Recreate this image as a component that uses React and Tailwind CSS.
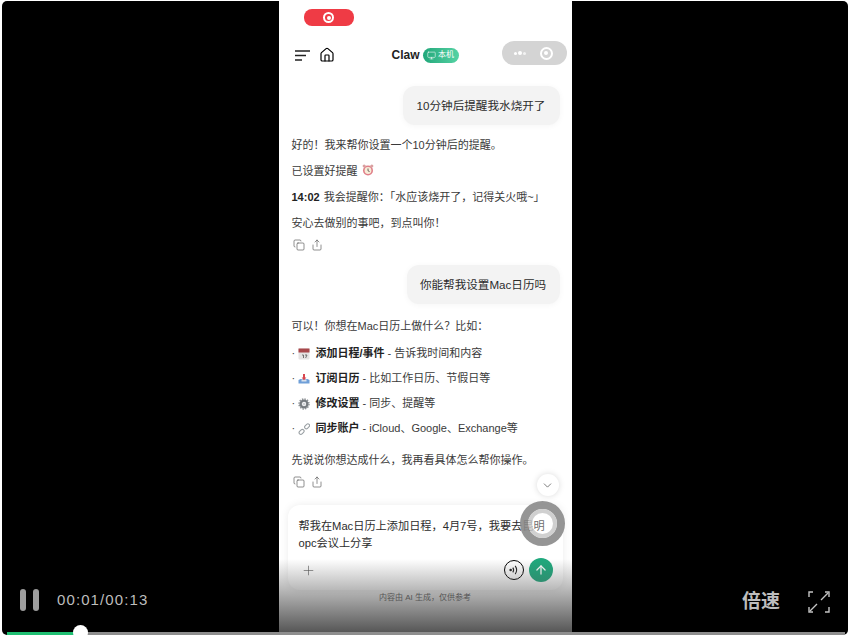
import { Copy, Share, Plus, ArrowUp, ChevronDown, Home, Monitor } from 'lucide-react';

const FONT = "font-['Liberation_Sans','Noto_Sans_CJK_SC',sans-serif]";

// small colour pictures standing in for the emoji in the chat
const AlarmEmoji = () => (
  <svg width="12" height="12" viewBox="0 0 12 12" className="inline-block ml-1 -mt-0.5">
    <circle cx="6" cy="6.5" r="5" fill="#e0808a" />
    <circle cx="6" cy="6.5" r="3.4" fill="#f8ecd8" />
    <circle cx="2.2" cy="2" r="1.6" fill="#d9a0a0" />
    <circle cx="9.8" cy="2" r="1.6" fill="#d9a0a0" />
    <path d="M6 4.5V6.8L7.6 7.6" stroke="#444" strokeWidth="0.8" fill="none" />
  </svg>
);

const CalendarEmoji = () => (
  <svg width="12" height="12" viewBox="0 0 12 12">
    <rect x="0.5" y="0.5" width="11" height="11" rx="1" fill="#e4e2e2" />
    <rect x="0.5" y="0.5" width="11" height="4" fill="#a8474b" />
    <path d="M4 7h1.5v3M7 7h2L7.6 10" stroke="#555" strokeWidth="0.8" fill="none" />
  </svg>
);

const InboxEmoji = () => (
  <svg width="12" height="12" viewBox="0 0 12 12">
    <path d="M0.5 7L2.5 6H9.5L11.5 7V10.5H0.5Z" fill="#6f9fd8" />
    <rect x="3.5" y="6.5" width="5" height="2" fill="#d9e3ee" />
    <path d="M6 7.2L3.6 4.4H5V1H7V4.4H8.4Z" fill="#d8474f" />
  </svg>
);

const GearEmoji = () => (
  <svg width="12" height="12" viewBox="0 0 12 12">
    <circle cx="6" cy="6" r="3.4" fill="none" stroke="#777c80" strokeWidth="2.4" />
    <circle cx="6" cy="6" r="5" fill="none" stroke="#8a8f92" strokeWidth="1.4" strokeDasharray="1.4 1.2" />
    <circle cx="6" cy="6" r="1.6" fill="#d2d4d6" />
  </svg>
);

const LinkEmoji = () => (
  <svg width="12" height="12" viewBox="0 0 12 12" fill="none" stroke="#9aa0a4" strokeWidth="1.1">
    <rect x="5.6" y="0.9" width="5.6" height="3.4" rx="1.7" transform="rotate(-45 8.4 2.6) translate(0 1)" />
    <rect x="0.8" y="7.2" width="5.6" height="3.4" rx="1.7" transform="rotate(-45 3.6 8.9)" />
  </svg>
);

const TargetDot = ({ className }) => (
  <div className={`flex items-center justify-center rounded-full border-2 border-white ${className}`}>
    <div className="w-1 h-1 rounded-full bg-white" />
  </div>
);

const UserBubble = ({ children, className }) => (
  <div className="flex justify-end pr-3">
    <div className={`flex h-[39px] items-center justify-center rounded-xl bg-[#f3f3f3] text-[11.6px] text-[#2c2c2c] shadow-[0_1px_6px_rgba(0,0,0,0.04)] ${className}`}>
      {children}
    </div>
  </div>
);

const ActionRow = ({ className }) => (
  <div className={`flex items-center gap-[6px] pl-px text-[#555] ${className}`}>
    <Copy size={12} strokeWidth={1.3} />
    <Share size={12} strokeWidth={1.3} />
  </div>
);

const ListItem = ({ icon, title, rest }) => (
  <div className="flex h-[25px] items-center">
    <span className="w-[6px] text-[#444]">·</span>
    <span className="mr-[6px] flex w-3 justify-center">{icon}</span>
    <b className="font-bold text-[#222]">{title}</b>
    <span className="ml-[3px]">- {rest}</span>
  </div>
);

export default function App() {
  return (
    <div className={`relative h-[636px] w-[850px] overflow-hidden bg-white ${FONT}`}>
      <div className="mx-[2px] mt-px flex h-[634px] justify-center overflow-hidden rounded-[5px] bg-black">
        {/* Phone recording */}
        <div className="relative flex h-full w-[293px] flex-col bg-white text-[11px] text-[#3a3a3a]">
          <div className="ml-[25px] mt-2 flex h-[17px] w-[50px] items-center justify-center rounded-lg bg-[#ef3b45]">
            <TargetDot className="h-[11px] w-[11px]" />
          </div>

          {/* Header */}
          <div className="relative mt-[17px] flex h-6 items-center justify-center">
            <div className="absolute left-4 flex items-center gap-[9px] text-black">
              <svg width="15" height="11" viewBox="0 0 15 11" stroke="#222" strokeWidth="1.4">
                <path d="M0 1H15M0 5.5H11M0 10H7" />
              </svg>
              <Home size={16} strokeWidth={1.8} />
            </div>
            <span className="text-[12px] font-bold text-[#222]">Claw</span>
            <span className="ml-[3px] flex h-[15px] w-9 items-center justify-center gap-0.5 rounded-full bg-gradient-to-r from-[#1fa77a] to-[#55d3a4] text-[8px] text-white">
              <Monitor size={9} strokeWidth={1.5} />
              本机
            </span>
            <div className="absolute left-[223px] top-[-2px] flex h-6 w-[65px] items-center justify-between rounded-full bg-[#d4d4d4] pl-3 pr-[14px]">
              <div className="flex items-center gap-px">
                <div className="h-[3px] w-[3px] rounded-full bg-white" />
                <div className="h-1 w-1 rounded-full bg-white" />
                <div className="h-[3px] w-[3px] rounded-full bg-white/70" />
              </div>
              <TargetDot className="h-[13px] w-[13px] border-[#eee]" />
            </div>
          </div>

          {/* Conversation */}
          <div className="mt-[19px] flex flex-col">
            <UserBubble className="w-[157px]">10分钟后提醒我水烧开了</UserBubble>
            <div className="mt-[7px] pl-[13px]">
              <p className="flex h-[26px] items-center">{'好的\uFF01我来帮你设置一个10分钟后的提醒。'}</p>
              <p className="flex h-[26px] items-center">已设置好提醒<AlarmEmoji /></p>
              <p className="flex h-[26px] items-center">
                <b className="mr-1 font-bold text-[#222]">14:02</b>{'我会提醒你\uFF1A「水应该烧开了\uFF0C记得关火哦~」'}
              </p>
              <p className="flex h-[26px] items-center">{'安心去做别的事吧\uFF0C到点叫你\uFF01'}</p>
              <ActionRow className="mt-[3px]" />
            </div>
            <UserBubble className="mt-[14px] w-[153px]">你能帮我设置Mac日历吗</UserBubble>
            <div className="mt-[9px] pl-[13px]">
              <p className="flex h-[26px] items-center">{'可以\uFF01你想在Mac日历上做什么\uFF1F比如\uFF1A'}</p>
              <div className="mt-[2px]">
                <ListItem icon={<CalendarEmoji />} title="添加日程/事件" rest="告诉我时间和内容" />
                <ListItem icon={<InboxEmoji />} title="订阅日历" rest="比如工作日历、节假日等" />
                <ListItem icon={<GearEmoji />} title="修改设置" rest="同步、提醒等" />
                <ListItem icon={<LinkEmoji />} title="同步账户" rest="iCloud、Google、Exchange等" />
              </div>
              <p className="mt-[6px] flex h-[26px] items-center">{'先说说你想达成什么\uFF0C我再看具体怎么帮你操作。'}</p>
              <ActionRow className="mt-[3px]" />
            </div>
          </div>

          {/* Composer */}
          <div className="ml-[9px] mt-[17px] flex h-[85px] w-[275px] flex-col rounded-xl bg-white pl-[11px] pr-[10px] pt-[13px] text-[11.2px] text-[#2c2c2c] shadow-[0_0_8px_rgba(0,0,0,0.08)]">
            <p className="whitespace-nowrap leading-[17px]">{'帮我在Mac日历上添加日程\uFF0C4月7号\uFF0C我要去昆明'}</p>
            <p className="leading-[17px]">opc会议上分享</p>
            <div className="mt-[6px] flex items-center justify-between">
              <Plus size={15} strokeWidth={1} className="ml-[2px] text-[#555]" />
              <div className="flex items-center gap-[5px]">
                <div className="flex h-5 w-5 items-center justify-center rounded-full border border-black bg-white">
                  <svg width="12" height="12" viewBox="0 0 10 10" fill="none" stroke="#222" strokeWidth="0.9">
                    <circle cx="2.2" cy="5" r="0.6" fill="#222" />
                    <path d="M4 3Q5.4 5 4 7M6 1.6Q8.4 5 6 8.4" />
                  </svg>
                </div>
                <div className="flex h-6 w-6 items-center justify-center rounded-full bg-[#1fa97d] text-white">
                  <ArrowUp size={14} strokeWidth={2.2} />
                </div>
              </div>
            </div>
          </div>
          <p className="relative z-10 mt-[2px] text-center text-[8px] text-[#555]">{'内容由 AI 生成\uFF0C仅供参考'}</p>

          {/* Scroll-down button and touch marker lie over the chat */}
          <div className="absolute left-[258px] top-[473px] flex h-[22px] w-[22px] items-center justify-center rounded-full bg-white text-[#555] shadow-[0_0_6px_rgba(0,0,0,0.15)]">
            <ChevronDown size={13} strokeWidth={1.4} />
          </div>
          <div className="absolute left-[241px] top-[500px] h-[45px] w-[45px] rounded-full border-[8px] border-[#8a8a8a]/90">
            <div className="h-full w-full rounded-full border-[4px] border-[#c4c4c4]/80 bg-white/30" />
          </div>

          {/* Dark fade under the video controls */}
          <div className="pointer-events-none absolute bottom-0 left-0 right-0 h-[76px] bg-gradient-to-b from-transparent to-[#505050]" />
        </div>
      </div>

      {/* Video controls */}
      <div className="absolute bottom-[25px] left-[20px] flex items-center gap-[18px]">
        <div className="flex gap-[7px]">
          <div className="h-[22px] w-[6px] rounded-sm bg-[#9c9c9c]" />
          <div className="h-[22px] w-[6px] rounded-sm bg-[#9c9c9c]" />
        </div>
        <span className="text-[15px] tracking-[1.1px] text-[#bdbdbd]">00:01/00:13</span>
      </div>
      <div className="absolute bottom-[22px] left-[742px] flex items-center gap-[28px]">
        <span className="text-[19px] font-bold leading-6 text-[#bdbdbd]">倍速</span>
        <svg width="22" height="22" viewBox="0 0 22 22" fill="none" stroke="#c4c4c4" strokeWidth="1.4">
          <path d="M1 6V1H5M17 21H21V16M1 16V21H5M17 1H21V6" />
          <path d="M13 9L20 2M9 13L2 20" />
        </svg>
      </div>
      <div className="absolute bottom-px left-[7px] flex h-[3px] w-[838px] bg-[#8e8e8e]">
        <div className="h-full w-[73px] bg-[#1fbf72]" />
      </div>
      <div className="absolute bottom-[-4px] left-[73px] h-[15px] w-[15px] rounded-full bg-white" />
    </div>
  );
}
